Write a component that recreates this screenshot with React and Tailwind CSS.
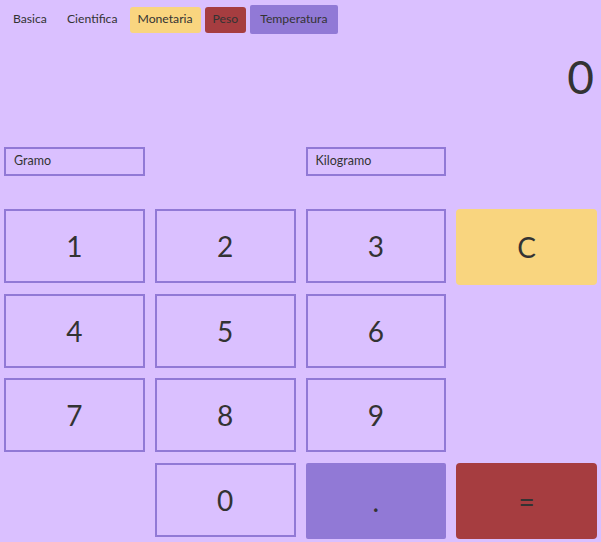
import React from "react";

const font = { fontFamily: 'Lato, "Open Sans", sans-serif' };

function Key({ children, variant = "plain" }) {
  if (variant === "yellow")
    return (
      <button className="h-[76px] rounded-[4px] bg-[#f9d57f] text-[28px] text-[#333333]">
        {children}
      </button>
    );
  if (variant === "red")
    return (
      <button className="h-[76px] rounded-[4px] bg-[#a63d40] text-[28px] text-[#333333]">
        {children}
      </button>
    );
  if (variant === "purple")
    return (
      <button className="h-[76px] rounded-[2px] bg-[#9179d6] text-[28px] text-[#333333]">
        {children}
      </button>
    );
  return (
    <button className="h-[74px] border-2 border-[#9179d6] bg-transparent text-[28px] text-[#333333]">
      {children}
    </button>
  );
}

export default function App() {
  return (
    <div
      className="w-[601px] h-[542px] overflow-hidden bg-[#dac0ff] text-[#333333]"
      style={font}
    >
      <nav className="flex items-center gap-[4px] pl-[5px] pt-[5px] h-[34px] text-[12.2px]">
        <button className="h-[26px] px-[8px] rounded-[3px]">Basica</button>
        <button className="h-[26px] px-[8px] rounded-[3px]">Cientifica</button>
        <button className="h-[26px] px-[8px] rounded-[3px] bg-[#f9d57f]">Monetaria</button>
        <button className="h-[26px] px-[8px] rounded-[3px] bg-[#a63d40]">Peso</button>
        <button className="h-[29px] px-[10px] rounded-[2px] bg-[#9179d6]">Temperatura</button>
      </nav>
      <div className="h-[113px] flex items-start justify-end pr-[7px] pt-[13px]">
        <span className="text-[46px] leading-[60px]">0</span>
      </div>
      <div className="grid grid-cols-4 gap-x-[10px] px-[4px]">
        <div className="h-[29px] border-2 border-[#9179d6] flex items-center pl-[8px] text-[12.5px]">
          Gramo
        </div>
        <div />
        <div className="h-[29px] border-2 border-[#9179d6] flex items-center pl-[8px] text-[12.5px]">
          Kilogramo
        </div>
        <div />
      </div>
      <div className="grid grid-cols-4 auto-rows-[76px] gap-x-[10px] gap-y-[8.67px] px-[4px] pt-[33px] items-start">
        <Key>1</Key>
        <Key>2</Key>
        <Key>3</Key>
        <Key variant="yellow">C</Key>
        <Key>4</Key>
        <Key>5</Key>
        <Key>6</Key>
        <div />
        <Key>7</Key>
        <Key>8</Key>
        <Key>9</Key>
        <div />
        <div />
        <Key>0</Key>
        <Key variant="purple">.</Key>
        <Key variant="red">=</Key>
      </div>
    </div>
  );
}
